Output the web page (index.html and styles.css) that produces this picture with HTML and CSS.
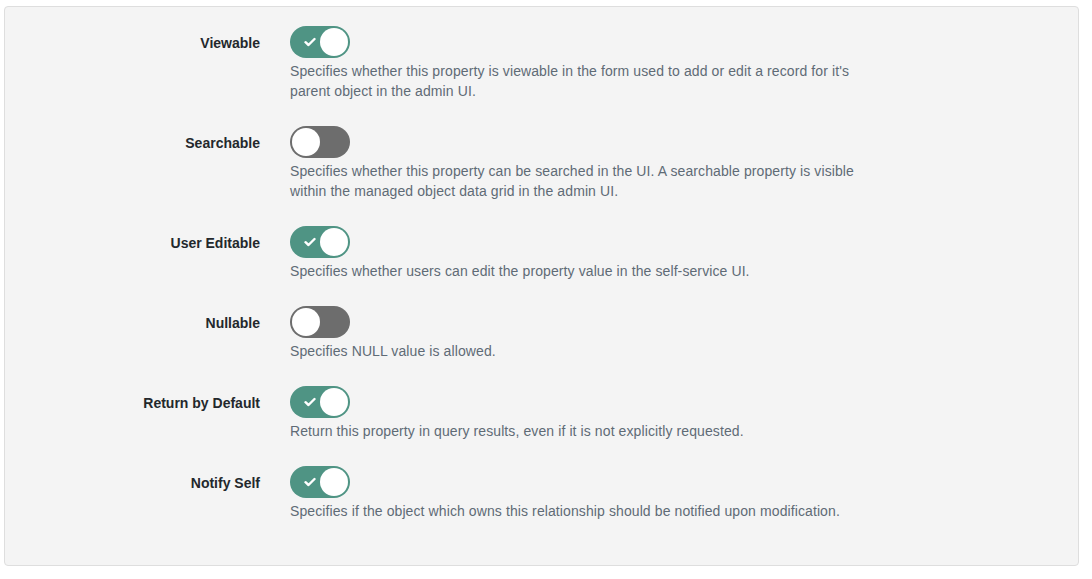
FILE: index.html
```html
<!DOCTYPE html>
<html>
<head>
<meta charset="utf-8">
<link rel="stylesheet" href="styles.css">
</head>
<body>
<div class="panel">
  <div class="row">
    <div class="label">Viewable</div>
    <div class="control">
      <div class="toggle on"><svg class="check" viewBox="0 0 12 10" width="12" height="10"><path d="M1.5 5.2 L4.5 8 L10.5 2" fill="none" stroke="#fff" stroke-width="2.4" stroke-linecap="round" stroke-linejoin="round"/></svg><span class="knob"></span></div>
      <p class="help">Specifies whether this property is viewable in the form used to add or edit a record for it's parent object in the admin UI.</p>
    </div>
  </div>
  <div class="row">
    <div class="label">Searchable</div>
    <div class="control">
      <div class="toggle off"><span class="knob"></span></div>
      <p class="help">Specifies whether this property can be searched in the UI. A searchable property is visible within the managed object data grid in the admin UI.</p>
    </div>
  </div>
  <div class="row">
    <div class="label">User Editable</div>
    <div class="control">
      <div class="toggle on"><svg class="check" viewBox="0 0 12 10" width="12" height="10"><path d="M1.5 5.2 L4.5 8 L10.5 2" fill="none" stroke="#fff" stroke-width="2.4" stroke-linecap="round" stroke-linejoin="round"/></svg><span class="knob"></span></div>
      <p class="help">Specifies whether users can edit the property value in the self-service UI.</p>
    </div>
  </div>
  <div class="row">
    <div class="label">Nullable</div>
    <div class="control">
      <div class="toggle off"><span class="knob"></span></div>
      <p class="help">Specifies NULL value is allowed.</p>
    </div>
  </div>
  <div class="row">
    <div class="label">Return by Default</div>
    <div class="control">
      <div class="toggle on"><svg class="check" viewBox="0 0 12 10" width="12" height="10"><path d="M1.5 5.2 L4.5 8 L10.5 2" fill="none" stroke="#fff" stroke-width="2.4" stroke-linecap="round" stroke-linejoin="round"/></svg><span class="knob"></span></div>
      <p class="help">Return this property in query results, even if it is not explicitly requested.</p>
    </div>
  </div>
  <div class="row">
    <div class="label">Notify Self</div>
    <div class="control">
      <div class="toggle on"><svg class="check" viewBox="0 0 12 10" width="12" height="10"><path d="M1.5 5.2 L4.5 8 L10.5 2" fill="none" stroke="#fff" stroke-width="2.4" stroke-linecap="round" stroke-linejoin="round"/></svg><span class="knob"></span></div>
      <p class="help">Specifies if the object which owns this relationship should be notified upon modification.</p>
    </div>
  </div>
</div>
</body>
</html>
```
FILE: styles.css
```css
html, body {
  margin: 0;
  padding: 0;
  background: #ffffff;
}
body {
  font-family: "Liberation Sans", Arial, sans-serif;
  font-size: 14px;
}
.panel {
  margin: 6px 13px 0 4px;
  height: 560px;
  box-sizing: border-box;
  background: #f4f4f4;
  border: 1px solid #dedede;
  border-radius: 4px;
  padding: 19px 0 0 0;
}
.row {
  display: grid;
  grid-template-columns: 255px 1fr;
  column-gap: 30px;
  margin-bottom: 25px;
}
.label {
  font-weight: bold;
  color: #23282c;
  text-align: right;
  height: 32px;
  line-height: 32px;
  padding-top: 1px;
}
.control {
  display: flex;
  flex-direction: column;
}
.toggle {
  width: 60px;
  height: 32px;
  border-radius: 16px;
  box-sizing: border-box;
  position: relative;
  display: flex;
  align-items: center;
}
.toggle.on {
  background: #4f9484;
}
.toggle.off {
  background: #6d6d6d;
}
.knob {
  width: 28px;
  height: 28px;
  border-radius: 50%;
  background: #ffffff;
  position: absolute;
  top: 2px;
}
.toggle.on .knob {
  right: 2px;
}
.toggle.off .knob {
  left: 2px;
}
.check {
  margin-left: 14px;
}
.help {
  margin: 3px 0 0 0;
  max-width: 565px;
  line-height: 20px;
  color: #5f6b76;
  letter-spacing: 0.1px;
}
```
